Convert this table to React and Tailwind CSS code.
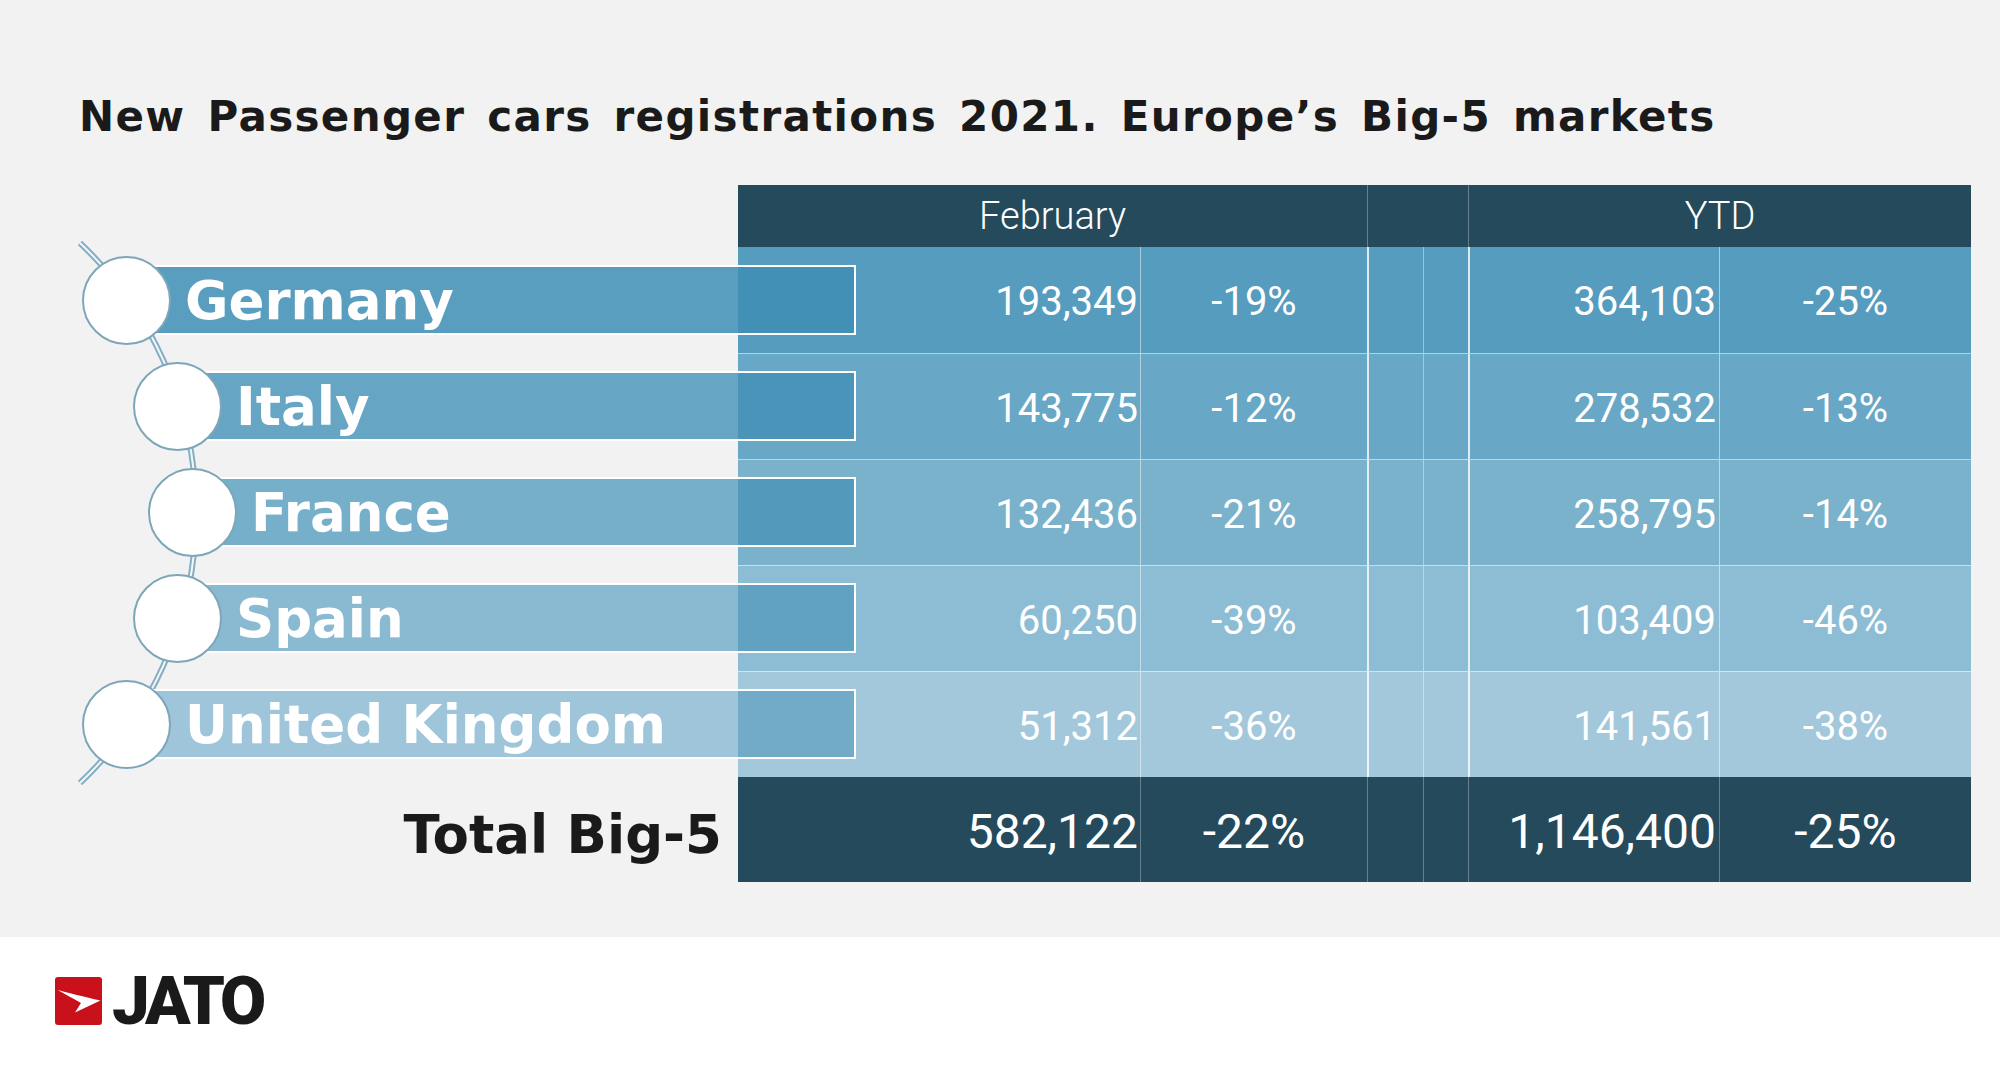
import React from 'react';

const cols = 'grid grid-cols-[738px_402px_227px_56px_45px_251px_252px]';

const rows = [
  { name: 'Germany', pad: 'pl-[82px]', bg: 'bg-[#569cbe]', bar: 'bg-[#5a9ebf]', dark: 'bg-[#4390b7]', feb: '193,349', febPct: '-19%', ytd: '364,103', ytdPct: '-25%' },
  { name: 'Italy', pad: 'pl-[133px]', bg: 'bg-[#68a7c5]', bar: 'bg-[#66a5c3]', dark: 'bg-[#4a94b9]', feb: '143,775', febPct: '-12%', ytd: '278,532', ytdPct: '-13%' },
  { name: 'France', pad: 'pl-[148px]', bg: 'bg-[#7ab1cb]', bar: 'bg-[#76afca]', dark: 'bg-[#5299bc]', feb: '132,436', febPct: '-21%', ytd: '258,795', ytdPct: '-14%' },
  { name: 'Spain', pad: 'pl-[133px]', bg: 'bg-[#8dbdd4]', bar: 'bg-[#89bad2]', dark: 'bg-[#61a1c1]', feb: '60,250', febPct: '-39%', ytd: '103,409', ytdPct: '-46%' },
  { name: 'United Kingdom', pad: 'pl-[82px]', bg: 'bg-[#a3c8dc]', bar: 'bg-[#9ec5d9]', dark: 'bg-[#72abc8]', feb: '51,312', febPct: '-36%', ytd: '141,561', ytdPct: '-38%' },
];

function Chain() {
  return (
    <svg className="absolute left-0 top-0 pointer-events-none" width="300" height="937">
      <path d="M 80 243 A 372 372 0 0 1 80 783" fill="none" stroke="#86aec2" strokeWidth="6" />
      <path d="M 80 243 A 372 372 0 0 1 80 783" fill="none" stroke="#f3f7f9" strokeWidth="2" />
    </svg>
  );
}

function JatoMark() {
  return (
    <div className="w-[47px] h-[48px] rounded-[3px] bg-[#c8111a]">
      <svg width="47" height="48" viewBox="0 0 47 48">
        <path d="M2.5 13 C12 15.5 30 20 45.5 23.5 L20 35.5 L26 26 C17 21 9 16.5 2.5 13 Z" fill="#fff" />
      </svg>
    </div>
  );
}

export default function App() {
  return (
    <div className="w-[2000px] h-[1065px] flex flex-col bg-white">
      <div className="relative h-[937px] bg-[#f2f2f2]">
        <Chain />
        <h1 className="pl-[79px] pt-[93px] text-[42px] leading-[48px] font-bold text-[#1a1a1a] font-['DejaVu_Sans',sans-serif] tracking-[1.35px] [word-spacing:6px] whitespace-nowrap">
          New Passenger cars registrations 2021. Europe’s Big-5 markets
        </h1>

        <div className="mt-[44px] font-[Roboto,sans-serif] text-white">
          {/* header */}
          <div className={`${cols} h-[62px]`}>
            <div />
            <div className="col-span-2 bg-[#244a5c] flex items-center justify-center text-[38px] font-light">February</div>
            <div className="col-span-2 bg-[#244a5c] border-l border-white/30" />
            <div className="col-span-2 bg-[#244a5c] border-l border-white/30 flex items-center justify-center text-[38px] font-light">YTD</div>
          </div>

          {/* rows */}
          {rows.map((r, i) => (
            <div key={r.name} className={`${cols} h-[106px]`}>
              <div className={`relative z-10 flex items-center ${r.pad}`}>
                <div className="relative z-10 w-[89px] h-[89px] shrink-0 rounded-full bg-white border-2 border-[#7ea6b9]" />
                <div className="flex-1 ml-[-44px] mr-[-118px] h-[70px] flex border-2 border-white">
                  <div className={`flex-1 flex items-center pl-[56px] ${r.bar}`}>
                    <span className="text-[53px] font-bold text-white font-['DejaVu_Sans',sans-serif] leading-none whitespace-nowrap">{r.name}</span>
                  </div>
                  <div className={`w-[116px] ${r.dark}`} />
                </div>
              </div>
              <div className={`${r.bg} ${i ? 'border-t border-white/50' : ''} flex items-center justify-end pr-[2px] pt-1 text-[40px]`}>{r.feb}</div>
              <div className={`${r.bg} ${i ? 'border-t border-white/50' : ''} border-l border-white/50 flex items-center justify-center pt-1 text-[40px]`}>{r.febPct}</div>
              <div className={`${r.bg} ${i ? 'border-t border-white/50' : ''} border-l-2 border-l-white/80`} />
              <div className={`${r.bg} ${i ? 'border-t border-white/50' : ''} border-l border-l-white/40`} />
              <div className={`${r.bg} ${i ? 'border-t border-white/50' : ''} border-l-2 border-l-white/80 flex items-center justify-end pr-[3px] pt-1 text-[40px]`}>{r.ytd}</div>
              <div className={`${r.bg} ${i ? 'border-t border-white/50' : ''} border-l border-l-white/50 flex items-center justify-center pt-1 text-[40px]`}>{r.ytdPct}</div>
            </div>
          ))}

          {/* total */}
          <div className={`${cols} h-[105px]`}>
            <div className="flex items-center justify-end pr-[16px] pt-[10px] text-[53px] font-bold text-[#1a1a1a] font-['DejaVu_Sans',sans-serif] leading-none">
              Total Big-5
            </div>
            <div className="bg-[#244a5c] flex items-center justify-end pr-[2px] pt-1 text-[48px]">582,122</div>
            <div className="bg-[#244a5c] border-l border-white/30 flex items-center justify-center pt-1 text-[48px]">-22%</div>
            <div className="bg-[#244a5c] border-l border-white/30" />
            <div className="bg-[#244a5c] border-l border-white/30" />
            <div className="bg-[#244a5c] border-l border-white/30 flex items-center justify-end pr-[3px] pt-1 text-[48px]">1,146,400</div>
            <div className="bg-[#244a5c] border-l border-white/30 flex items-center justify-center pt-1 text-[48px]">-25%</div>
          </div>
        </div>
      </div>

      <div className="flex-1 flex items-center pl-[55px] gap-[10px]">
        <JatoMark />
        <span className="text-[67px] leading-none font-black text-[#1a1a1a] font-[Roboto,sans-serif] tracking-[-4px]">JATO</span>
      </div>
    </div>
  );
}
